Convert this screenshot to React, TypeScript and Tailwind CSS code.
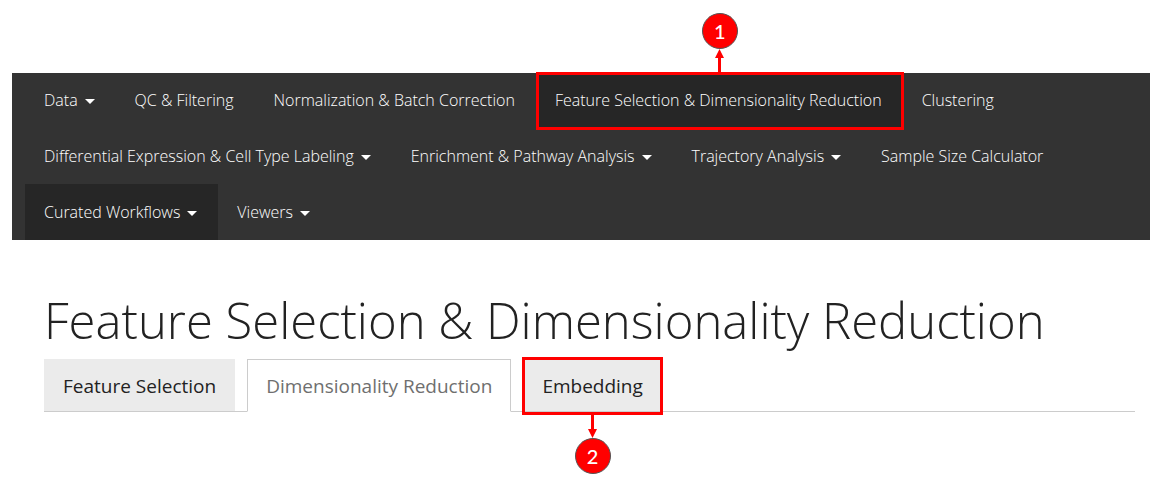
import React from "react";

type NavItem = { label: string; menu?: boolean; active?: boolean; marked?: boolean };

const items: NavItem[] = [
  { label: "Data", menu: true },
  { label: "QC & Filtering" },
  { label: "Normalization & Batch Correction" },
  { label: "Feature Selection & Dimensionality Reduction", active: true, marked: true },
  { label: "Clustering" },
  { label: "Differential Expression & Cell Type Labeling", menu: true },
  { label: "Enrichment & Pathway Analysis", menu: true },
  { label: "Trajectory Analysis", menu: true },
  { label: "Sample Size Calculator" },
  { label: "Curated Workflows", menu: true, active: true },
  { label: "Viewers", menu: true },
];

function Marker({ n, below }: { n: number; below?: boolean }) {
  return (
    <span
      className={
        below
          ? "absolute top-full left-1/2 flex -translate-x-1/2 flex-col-reverse items-center"
          : "absolute bottom-full left-1/2 flex -translate-x-1/2 flex-col items-center"
      }
    >
      <span className="flex size-9 items-center justify-center rounded-full border border-[#555] bg-[#ff0000] font-[Lato,sans-serif] text-xl font-medium text-white">
        {n}
      </span>
      <svg width="9" height="26" viewBox="0 0 9 26" className={below ? "rotate-180" : ""}>
        <path d="M4.5 0L9 9H6V26H3V9H0Z" fill="#ff0000" />
      </svg>
    </span>
  );
}

export default function App() {
  return (
    <main className="pt-[73px] pr-[9px] pb-[74px] pl-3 font-['Open_Sans',sans-serif]">
      <nav className="flow-root bg-[#333] pl-[13px]">
        <ul className="-mt-px flex flex-wrap">
          {items.map((item) => (
            <li key={item.label} className="relative">
              <a
                href="#"
                className={`flex h-14 items-center gap-[7px] pr-[21px] pl-[19px] text-base font-light text-white ${item.active ? "bg-[#262626]" : ""}`}
              >
                {item.label}
                {item.menu && (
                  <svg width="10" height="5" viewBox="0 0 10 5" className="mt-[3px]">
                    <path d="M0 0H10L5 5Z" fill="#fff" />
                  </svg>
                )}
              </a>
              {item.marked && (
                <span className="pointer-events-none absolute top-0 -right-px -bottom-0.5 left-0 border-3 border-[#ff0000]">
                  <Marker n={1} />
                </span>
              )}
            </li>
          ))}
        </ul>
      </nav>
      <section className="pt-12 pr-[15px] pl-8">
        <h1 className="text-[49px] leading-[64px] font-light text-[#222]">
          Feature Selection &amp; Dimensionality Reduction
        </h1>
        <div role="tablist" className="mt-[7px] flex gap-3 border-b border-[#ccc] text-[19px]">
          <button role="tab" className="h-[52px] bg-[#ebebeb] px-[19px] pt-0.5 text-[#222]">Feature Selection</button>
          <button role="tab" aria-selected="true" className="-mb-px border border-[#ccc] border-b-white bg-white px-[18px] pt-0.5 text-[#6f6f6f]">
            Dimensionality Reduction
          </button>
          <div className="relative">
            <button role="tab" className="h-[52px] bg-[#ebebeb] px-[19px] pt-0.5 text-[#222]">Embedding</button>
            <span className="pointer-events-none absolute -inset-x-px -top-0.5 -bottom-1 border-3 border-[#ff0000]">
              <Marker n={2} below />
            </span>
          </div>
        </div>
      </section>
    </main>
  );
}
